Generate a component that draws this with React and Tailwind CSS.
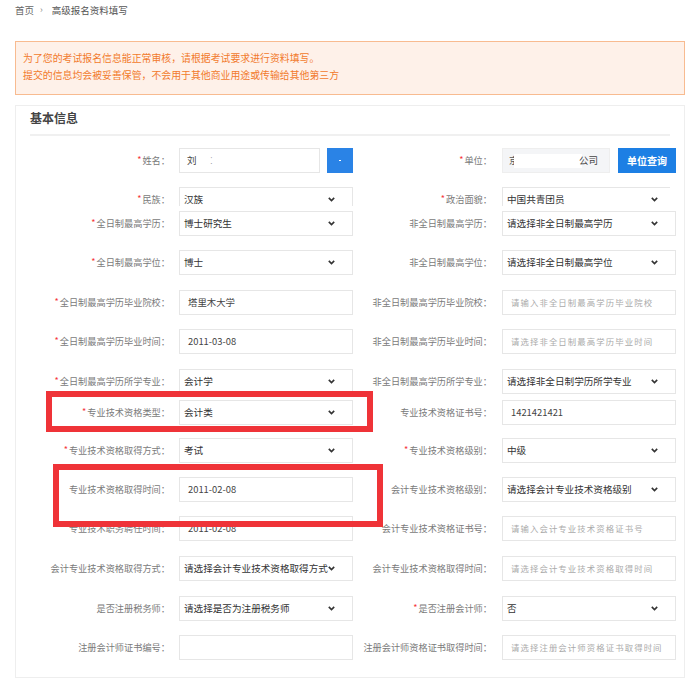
import React from "react";

const FONT = { fontFamily: '"Noto Sans CJK SC", "Noto Sans", sans-serif' };

function Chevron() {
  return (
    <svg width="7" height="5" viewBox="0 0 7 5" className="shrink-0">
      <polyline points="0.8,0.9 3.5,3.6 6.2,0.9" fill="none" stroke="#333" strokeWidth="1.6" />
    </svg>
  );
}

function Label({ text, req, w }) {
  return (
    <div className={`${w} h-[25px] shrink-0 flex items-center justify-end text-[9.2px] text-[#7a7a7a] whitespace-nowrap`}>
      {req && <span className="text-[#f5343a] text-[9px] mr-[1px] -mt-[1px]">*</span>}
      {text}：
    </div>
  );
}

function Select({ value }) {
  return (
    <div className="w-[174px] h-[25px] shrink-0 border border-[#e6e6e6] bg-white flex items-center justify-between pl-[4px] pr-[17px]">
      <span className="text-[9.6px] text-[#333] whitespace-nowrap">{value}</span>
      <Chevron />
    </div>
  );
}

function Input({ value, placeholder }) {
  return (
    <div className="w-[174px] h-[25px] shrink-0 border border-[#e6e6e6] bg-white flex items-center pl-[8px]">
      {value ? (
        <span className="text-[9.4px] text-[#444] whitespace-nowrap">{value}</span>
      ) : (
        <span className="text-[8.4px] tracking-[1.1px] text-[#aaaaaa] whitespace-nowrap">{placeholder}</span>
      )}
    </div>
  );
}

function Control({ c }) {
  if (c.type === "select") return <Select value={c.value} />;
  return <Input value={c.value} placeholder={c.placeholder} />;
}

const rows = [
  {
    mt: "mt-[14px]", clip: true,
    l: { label: "民族", req: true, c: { type: "select", value: "汉族" } },
    r: { label: "政治面貌", req: true, c: { type: "select", value: "中国共青团员" } },
  },
  {
    mt: "mt-[5px]",
    l: { label: "全日制最高学历", req: true, c: { type: "select", value: "博士研究生" } },
    r: { label: "非全日制最高学历", c: { type: "select", value: "请选择非全日制最高学历" } },
  },
  {
    mt: "mt-[14px]",
    l: { label: "全日制最高学位", req: true, c: { type: "select", value: "博士" } },
    r: { label: "非全日制最高学位", c: { type: "select", value: "请选择非全日制最高学位" } },
  },
  {
    mt: "mt-[15px]",
    l: { label: "全日制最高学历毕业院校", req: true, c: { type: "input", value: "塔里木大学" } },
    r: { label: "非全日制最高学历毕业院校", c: { type: "input", placeholder: "请输入非全日制最高学历毕业院校" } },
  },
  {
    mt: "mt-[14px]",
    l: { label: "全日制最高学历毕业时间", req: true, c: { type: "input", value: "2011-03-08" } },
    r: { label: "非全日制最高学历毕业时间", c: { type: "input", placeholder: "请选择非全日制最高学历毕业时间" } },
  },
  {
    mt: "mt-[15px]",
    l: { label: "全日制最高学历所学专业", req: true, c: { type: "select", value: "会计学" } },
    r: { label: "非全日制最高学历所学专业", c: { type: "select", value: "请选择非全日制学历所学专业" } },
  },
  {
    mt: "mt-[6px]",
    l: { label: "专业技术资格类型", req: true, c: { type: "select", value: "会计类" } },
    r: { label: "专业技术资格证书号", c: { type: "input", value: "1421421421" } },
  },
  {
    mt: "mt-[13px]",
    l: { label: "专业技术资格取得方式", req: true, c: { type: "select", value: "考试" } },
    r: { label: "专业技术资格级别", req: true, c: { type: "select", value: "中级" } },
  },
  {
    mt: "mt-[14px]",
    l: { label: "专业技术资格取得时间", c: { type: "input", value: "2011-02-08" } },
    r: { label: "会计专业技术资格级别", c: { type: "select", value: "请选择会计专业技术资格级别" } },
  },
  {
    mt: "mt-[14px]",
    l: { label: "专业技术职务聘任时间", req: true, c: { type: "input", value: "2011-02-08" } },
    r: { label: "会计专业技术资格证书号", c: { type: "input", placeholder: "请输入会计专业技术资格证书号" } },
  },
  {
    mt: "mt-[15px]",
    l: { label: "会计专业技术资格取得方式", c: { type: "select", value: "请选择会计专业技术资格取得方式" } },
    r: { label: "会计专业技术资格取得时间", c: { type: "input", placeholder: "请选择会计专业技术资格取得时间" } },
  },
  {
    mt: "mt-[15px]",
    l: { label: "是否注册税务师", c: { type: "select", value: "请选择是否为注册税务师" } },
    r: { label: "是否注册会计师", req: true, c: { type: "select", value: "否" } },
  },
  {
    mt: "mt-[14px]",
    l: { label: "注册会计师证书编号", c: { type: "input", value: "", placeholder: "" } },
    r: { label: "注册会计师资格证书取得时间", c: { type: "input", placeholder: "请选择注册会计师资格证书取得时间" } },
  },
];

function Row({ row }) {
  const inner = (
    <div className="flex items-start">
      <Label text={row.l.label} req={row.l.req} w="w-[140px]" />
      <div className="ml-[9px]"><Control c={row.l.c} /></div>
      <Label text={row.r.label} req={row.r.req} w="w-[139px]" />
      <div className="ml-[10px]"><Control c={row.r.c} /></div>
    </div>
  );
  if (row.clip) {
    return <div className={`${row.mt} h-[19px] overflow-hidden`}>{inner}</div>;
  }
  return <div className={row.mt}>{inner}</div>;
}

export default function App() {
  return (
    <div className="w-[700px] h-[678px] overflow-hidden bg-white relative" style={FONT}>
      {/* breadcrumb */}
      <div className="h-[20px] flex items-center pl-[15px] text-[9.5px] text-[#666]">
        <span>首页</span>
        <span className="ml-[6px] mr-[9px] text-[9px] text-[#888]">›</span>
        <span className="text-[#555]">高级报名资料填写</span>
      </div>

      {/* notice */}
      <div className="mx-[15px] mt-[21px] h-[54px] border border-[#f8bb90] bg-[#fef1e9] pl-[7px] pt-[8px] text-[9.9px] leading-[17px] text-[#f27a2c]">
        <div>为了您的考试报名信息能正常审核，请根据考试要求进行资料填写。</div>
        <div>提交的信息均会被妥善保管，不会用于其他商业用途或传输给其他第三方</div>
      </div>

      {/* card */}
      <div className="mx-[15px] mt-[10px] h-[573px] border border-[#eeeeee] px-[14px]">
        <div className="h-[30px] leading-[24px] border-b-2 border-[#f0f0f0] text-[12px] font-bold text-[#444]">
          基本信息
        </div>

        {/* row 1 */}
        <div className="mt-[12px] flex items-start">
          <Label text="姓名" req w="w-[140px]" />
          <div className="ml-[9px] w-[174px] flex">
            <div className="w-[141px] h-[25px] border border-[#e6e6e6] bg-white flex items-center pl-[7px] text-[9.5px] text-[#444]">
              <span>刘</span>
              <span className="ml-[14px] text-[#999] text-[8px]">⁚</span>
            </div>
            <div className="ml-[7px] w-[26px] h-[25px] bg-[#2a83e6] flex items-center justify-center">
              <span className="w-[2px] h-[1px] bg-white" />
            </div>
          </div>
          <Label text="单位" req w="w-[139px]" />
          <div className="ml-[10px] w-[174px] flex">
            <div className="w-[108px] h-[25px] border border-[#eeeeee] bg-[#f4f5f7] flex items-center pl-[6px] text-[9.5px] text-[#444] overflow-hidden whitespace-nowrap">
              <span className="inline-block w-[5px] overflow-hidden text-[#555]">京</span>
              <span className="inline-block w-[68px] h-[14px] bg-white" />
              <span className="-ml-[3px]">公司</span>
            </div>
            <div className="ml-[8px] w-[58px] h-[25px] bg-[#1d7fe4] flex items-center justify-center text-white text-[10px] font-bold">
              单位查询
            </div>
          </div>
        </div>

        {rows.map((r, i) => (
          <Row key={i} row={r} />
        ))}
      </div>

      {/* annotation rectangles */}
      <div className="absolute left-[46px] top-[391px] w-[327px] h-[41px] border-[6px] border-[#ef3338]" />
      <div className="absolute left-[53px] top-[464px] w-[330px] h-[63px] border-[6px] border-[#ef3338]" />
    </div>
  );
}
